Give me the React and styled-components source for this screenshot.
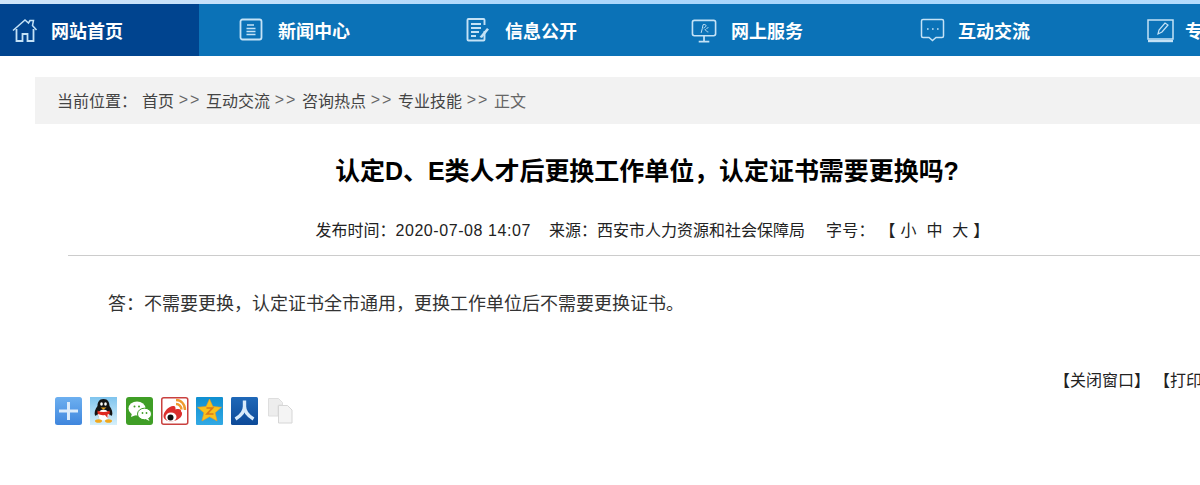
import styled, { createGlobalStyle } from 'styled-components'

const GlobalStyle = createGlobalStyle`
html, body {
  margin: 0;
  padding: 0;
  background: #fff;
  overflow: hidden;
}
body {
  font-family: "Liberation Sans", "Noto Sans CJK SC", sans-serif;
  color: #333;
}
`;

const Page = styled.div`
width: 1200px;
height: 485px;
overflow: hidden;
background: #fff;
`;
const TopStrip = styled.div`
height: 4px;
background: linear-gradient(90deg, #cfe5fa 0, #c4e0fa 260px, #aed8fc 500px, #a8d5fc 800px, #b4dcfd 1200px);
`;
const Nav = styled.div`
display: flex;
width: 1400px;
height: 52px;
background: #0b72b7;
`;
const NavItem = styled.div`
flex: none;
display: flex;
align-items: center;
box-sizing: border-box;
width: ${(props) => (props.$home ? '199px' : '227px')};
padding-left: ${(props) => (props.$home ? '11px' : '39px')};
background: ${(props) => (props.$home ? '#00448f' : 'transparent')};
color: #fff;
font-size: 18px;
font-weight: 700;
white-space: nowrap;
`;
const NavIcon = styled.svg`
flex: none;
width: ${(props) => props.$width || 28}px;
height: 28px;
margin-left: ${(props) => props.$shift || 0}px;
margin-right: ${(props) => props.$gap || 11}px;
fill: none;
stroke: #c4e2f6;
stroke-width: 1.5;
`;
const Main = styled.div`
width: 1224px;
margin: 21px 0 0 35px;
`;
const Crumbs = styled.div`
display: flex;
align-items: center;
height: 47px;
padding: 0 0 2px 22px;
box-sizing: border-box;
background: #f2f2f2;
font-size: 16px;
color: #444;
white-space: pre;
`;
const CrumbLabel = styled.span`
width: 85px;
`;
const CrumbSep = styled.span`
width: 32px;
text-align: center;
letter-spacing: 2px;
color: #666;
`;
const CrumbLast = styled.span`
color: #666;
`;
const Title = styled.h1`
margin: 29px 0 0;
font-size: 25px;
line-height: 36px;
font-weight: 700;
letter-spacing: -0.05px;
text-align: center;
color: #000;
`;
const Meta = styled.div`
display: flex;
justify-content: center;
gap: 18px;
margin: 30px 0 0 33px;
padding-right: 22px;
height: 36px;
line-height: 24px;
font-size: 16px;
color: #222;
white-space: pre;
border-bottom: 1px solid #ccc;
`;
const Stamp = styled.span`
letter-spacing: 0.57px;
`;
const MetaSize = styled.span`
margin-left: 3px;
letter-spacing: 0.3px;
`;
const Body = styled.p`
margin: 35px 0 0 73px;
font-size: 18px;
line-height: 27px;
color: #333;
`;
const Actions = styled.div`
display: flex;
gap: 4px;
margin: 51px 0 0 1019px;
font-size: 16px;
line-height: 24px;
color: #222;
white-space: nowrap;
`;
const ShareBar = styled.div`
display: flex;
gap: 7.3px;
margin: 4px 0 0 20px;
`;
const ShareIcon = styled.svg`
flex: none;
width: 28px;
height: 28px;
`;

const Home = () => (
  <NavIcon viewBox="0 0 28 28" $gap={12}>
    <path d="M2 14.5 14 4l3.500 3 1.500-2.500h3.500l-1 5 4 4.500" />
    <path d="M5.500 13v12h6v-7h5v7h6V13" strokeWidth="1.800" />
  </NavIcon>
);
const News = () => (
  <NavIcon viewBox="0 0 28 28" $gap={12}>
    <rect x="2.500" y="3.500" width="21" height="20" rx="2" strokeWidth="1.800" />
    <path d="M9 9h7M8.500 12.500h9M8.500 15.500h9M8.500 18.500h9" />
  </NavIcon>
);
const Info = () => (
  <NavIcon viewBox="0 0 28 28" $gap={12}>
    <path d="M19.500 15v8.500a1 1 0 0 1-1 1h-15a1 1 0 0 1-1-1V4a1 1 0 0 1 1-1h15a1 1 0 0 1 1 1v5" strokeWidth="1.900" />
    <path d="M6 8h10M6 12h10M6 16h8M6 20h5" strokeWidth="1.800" />
    <path d="m14.500 21 7.500-9 2 1.500-7 8.500z" fill="#c4e2f6" stroke="none" />
  </NavIcon>
);
const Service = () => (
  <NavIcon viewBox="0 0 28 28" $width={27} $shift={-1} $gap={13}>
    <rect x="1.500" y="4" width="24" height="16" rx="2" strokeWidth="1.700" />
    <path d="M8 26h11M13.500 20v6" strokeWidth="1.800" />
    <path d="M10.500 17c1-3 1.500-6 2-8.500 3.500-1 4.500 2 .5 3.500M14.500 13c1 2 2 3 3.500 3M16 13l2-2" strokeWidth="1" />
  </NavIcon>
);
const Chat = () => (
  <NavIcon viewBox="0 0 28 28" $gap={11}>
    <path d="M4 3.500h19a1.500 1.500 0 0 1 1.500 1.500v15a1.500 1.500 0 0 1-1.500 1.500h-6l-3.500 3-3.500-3H4A1.500 1.500 0 0 1 2.500 20V5A1.500 1.500 0 0 1 4 3.500z" />
    <path d="M8 13h1.600M13 13h1.600M18 13h1.600" strokeWidth="1.600" />
  </NavIcon>
);
const Edit = () => (
  <NavIcon viewBox="0 0 28 28" $gap={11}>
    <path d="M2 4h25v19H2z" />
    <path d="M2 25h25" strokeWidth="2.400" />
    <path d="m12 18 1-4 6-7 3 2-6 7z" strokeWidth="1.200" />
  </NavIcon>
);

const Share = ({ children }) => <ShareIcon viewBox="0 0 28 28">{children}</ShareIcon>;

const Footer = () => (
  <ShareBar>
    <Share>
      <defs>
        <linearGradient id="plusBg" x1="0" y1="0" x2="0" y2="1">
          <stop offset="0" stopColor="#6db0f0" />
          <stop offset="1" stopColor="#3f86dd" />
        </linearGradient>
      </defs>
      <rect width="27" height="28" rx="2.500" fill="url(#plusBg)" />
      <path d="M13.500 5v18M4 14h19" stroke="#dcecfb" strokeWidth="3" />
    </Share>
    <Share>
      <defs>
        <linearGradient id="qqBg" x1="0" y1="0" x2="0" y2="1">
          <stop offset="0" stopColor="#7fc4ee" />
          <stop offset="1" stopColor="#d6f0fb" />
        </linearGradient>
      </defs>
      <rect width="27" height="28" fill="url(#qqBg)" />
      <path d="M13.500 2c4.500 0 6 3.500 6 7 2.500 3 3.500 7 2.500 9.500-1 .500-2-.500-2.500-1.500-.500 3-2 5-6 5s-5.500-2-6-5c-.500 1-1.500 2-2.500 1.500-1-2.500 0-6.500 2.500-9.500 0-3.500 1.500-7 6-7z" fill="#141414" />
      <ellipse cx="13.500" cy="18" rx="5.500" ry="5.500" fill="#fff" />
      <path d="M7.500 13.500c4 2 8 2 12 0l.5 3-2.500 1v3.500l-2.500-3c-3 .500-5 0-7.500-1.500z" fill="#e0281f" />
      <path d="M10.500 10.500h6l-3 2z" fill="#f2a81c" />
      <ellipse cx="11.500" cy="7" rx="1.300" ry="1.800" fill="#fff" />
      <ellipse cx="15.500" cy="7" rx="1.300" ry="1.800" fill="#fff" />
      <ellipse cx="8.500" cy="24" rx="3.500" ry="1.800" fill="#f2a81c" />
      <ellipse cx="18.500" cy="24" rx="3.500" ry="1.800" fill="#f2a81c" />
    </Share>
    <Share>
      <rect width="27" height="28" rx="3" fill="#3f9e26" />
      <ellipse cx="11" cy="11.500" rx="8.500" ry="7" fill="#fff" />
      <path d="m6 16-1 4 5-2z" fill="#fff" />
      <ellipse cx="18.500" cy="17" rx="7" ry="5.800" fill="#fff" stroke="#3f9e26" />
      <path d="m22 21 1.500 3-4-2z" fill="#fff" />
      <circle cx="8.500" cy="9.500" r="1" fill="#3f9e26" />
      <circle cx="13" cy="9.500" r="1" fill="#3f9e26" />
      <circle cx="16.500" cy="16" r=".9" fill="#3f9e26" />
      <circle cx="20.500" cy="16" r=".9" fill="#3f9e26" />
    </Share>
    <Share>
      <rect x=".75" y=".75" width="26" height="26.500" rx="2" fill="#fff" stroke="#c9413f" strokeWidth="1.500" />
      <path d="M2.500 19c0-5 6.500-11 10.500-10 2 .500 1.500 3.500 1.500 3.500 3-1 6-.500 5.500 2 2 1 2 7-7 9.500-6 1-10.500-1-10.500-5z" fill="#dc2f2c" />
      <ellipse cx="10" cy="20" rx="5.500" ry="4.500" fill="#fff" />
      <circle cx="9.500" cy="20.500" r="3" fill="#111" />
      <path d="M15 3c5 0 9 4 9 10M15 7c3 0 5.500 2.500 5.500 5.500" fill="none" stroke="#f09a2d" strokeWidth="2.400" />
    </Share>
    <Share>
      <defs>
        <linearGradient id="zoneBg" x1="0" y1="0" x2="0" y2="1">
          <stop offset="0" stopColor="#0f8fd0" />
          <stop offset="1" stopColor="#32a9e4" />
        </linearGradient>
      </defs>
      <rect width="27" height="28" rx="1" fill="url(#zoneBg)" />
      <path d="m13.500 2 3.400 7.500 8.600.8-6.400 5.500 2 8.200-7.600-4.300-7.600 4.300 2-8.200L1.500 10.300l8.600-.8z" fill="#f8c21c" stroke="#f39a1c" strokeWidth=".6" />
      <path d="M10.500 11h6l-5.500 6h6.500" fill="none" stroke="#d9781a" strokeWidth="1.700" />
    </Share>
    <Share>
      <defs>
        <linearGradient id="renBg" x1="0" y1="0" x2="0" y2="1">
          <stop offset="0" stopColor="#1f68b8" />
          <stop offset="1" stopColor="#0d4a98" />
        </linearGradient>
      </defs>
      <rect width="27" height="28" rx="1.500" fill="url(#renBg)" />
      <path d="M13.500 3.500v6c0 4.500-4 9.500-9 12.500M13.500 9.500c0 4.500 4 9.500 9 12.500" fill="none" stroke="#d8ebfb" strokeWidth="3.400" />
    </Share>
    <Share>
      <path d="M1.500 1.500h10l4 4V8H12a1 1 0 0 0-1 1v10H1.500z" fill="#ededed" stroke="#dedede" />
      <path d="M11.500 8.500h9l4.500 4.500v13H11.500z" fill="#f4f4f4" stroke="#d6d6d6" />
    </Share>
  </ShareBar>
);

const App = () => {
  return (
    <>
      <GlobalStyle />
      <Page>
        <TopStrip />
        <Nav>
          <NavItem $home><Home />网站首页</NavItem>
          <NavItem><News />新闻中心</NavItem>
          <NavItem><Info />信息公开</NavItem>
          <NavItem><Service />网上服务</NavItem>
          <NavItem><Chat />互动交流</NavItem>
          <NavItem><Edit />专家访谈</NavItem>
        </Nav>
        <Main>
          <Crumbs>
            <CrumbLabel>当前位置：</CrumbLabel>
            <span>首页</span>
            <CrumbSep>&gt;&gt;</CrumbSep>
            <span>互动交流</span>
            <CrumbSep>&gt;&gt;</CrumbSep>
            <span>咨询热点</span>
            <CrumbSep>&gt;&gt;</CrumbSep>
            <span>专业技能</span>
            <CrumbSep>&gt;&gt;</CrumbSep>
            <CrumbLast>正文</CrumbLast>
          </Crumbs>
          <Title>认定D、E类人才后更换工作单位，认定证书需要更换吗?</Title>
          <Meta>
            <span>发布时间：<Stamp>2020-07-08 14:07</Stamp></span>
            <span>来源：西安市人力资源和社会保障局</span>
            <MetaSize>字号： 【 小  中  大 】</MetaSize>
          </Meta>
          <Body>答：不需要更换，认定证书全市通用，更换工作单位后不需要更换证书。</Body>
          <Actions>
            <span>【关闭窗口】</span>
            <span>【打印】</span>
          </Actions>
          <Footer />
        </Main>
      </Page>
    </>
  )
}

export default App
